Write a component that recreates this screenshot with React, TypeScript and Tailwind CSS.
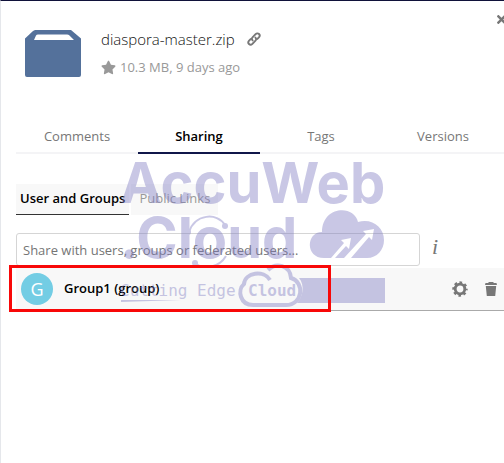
import { useState } from "react";
import { FaStar, FaTimes } from "react-icons/fa";

const tabs = ["Comments", "Sharing", "Tags", "Versions"];
const shareTabs = ["User and Groups", "Public Links"];

function ArchiveIcon() {
  return (
    <svg width="56" height="47" viewBox="0 0 56 47" fill="#54719b" fillRule="evenodd" aria-hidden="true">
      <path d="M10 0h36l10 8.5V45a2 2 0 0 1-2 2H2a2 2 0 0 1-2-2V8.5L8 1zM13 4.5q-1.500 0-2 1L9 10h40l-4.500-4.500q-1-1-2.500-1z" />
    </svg>
  );
}

function LinkIcon() {
  return (
    <svg width="14" height="14" viewBox="0 0 14 14" fill="none" stroke="currentColor" strokeWidth="1.9" strokeLinecap="round" aria-hidden="true">
      <path d="M5.600 8.400C4.600 7.400 4.700 6.200 5.500 5.400L8.600 2.200C9.700 1.100 11.100 1.100 12 2C12.900 2.900 12.900 4.300 11.900 5.400L10.400 6.900" />
      <path d="M8.400 5.600C9.400 6.600 9.300 7.800 8.500 8.600L5.400 11.800C4.300 12.900 2.900 12.900 2 12C1.100 11.100 1.100 9.700 2.100 8.600L3.600 7.100" />
    </svg>
  );
}

function GearIcon() {
  return (
    <svg width="16" height="16" viewBox="0 0 16 16" fill="none" stroke="currentColor" aria-hidden="true">
      <circle cx="8" cy="8" r="4.8" strokeWidth="2.8" />
      <circle cx="8" cy="8" r="6.5" strokeWidth="2.4" strokeDasharray="2.6 2.505" strokeDashoffset="1.3" />
    </svg>
  );
}

function TrashIcon() {
  return (
    <svg width="12" height="14" viewBox="0 0 12 14" fill="currentColor" aria-hidden="true">
      <path d="M4 0h4l1 1h2.500l.5 2H0l.5-2H3zM.8 4h10.400L10.200 14H1.800z" />
    </svg>
  );
}

function Watermark() {
  return (
    <svg
      className="pointer-events-none absolute left-[118px] top-[155px] overflow-visible"
      width="268"
      height="155"
      viewBox="0 0 268 155"
      fill="#7f7cc2"
      opacity="0.42"
      aria-hidden="true"
    >
      <g fontFamily="Inter, sans-serif" fontWeight="700" fontSize="56">
        <text x="1" y="47">AccuWeb</text>
        <text x="1" y="102">.Cloud</text>
      </g>
      {/* orbit around the "o" */}
      <g fill="none" stroke="#7f7cc2" strokeWidth="2">
        <path d="M70 76C76 58 98 56 106 69" />
        <path d="M76 107c8 7 24 5 31-7" />
      </g>
      <circle cx="69" cy="76" r="3" />
      <circle cx="106" cy="70" r="3" />
      <circle cx="76" cy="107" r="3" />
      {/* cloud with rising arrows */}
      <path
        fillRule="evenodd"
        d="M205 102c-19 0-18-26-2-26 0-26 32-28 36-10 14-4 26 5 26 18 0 10-7 18-17 18h-16l18-21 3 3 2-11-11 2 3 3-22 24h-9l11-12 3 3 2-11-10 2 3 3-13 15z"
      />
      <g fontFamily="'DejaVu Sans Mono', monospace" fontSize="16">
        <text x="1" y="140">Cutting Edge</text>
        <text x="129" y="140" fontWeight="700">Cloud</text>
      </g>
      <path d="M2 144h60l-60 2z" />
      <path d="M180 122h86v25h-88c6-6 8-18 2-25z" />
      <path
        fill="none"
        stroke="#7f7cc2"
        strokeWidth="4"
        d="M151 124C145 114 126 116 125 128C118 134 121 149 134 149h33c17 0 19-23 5-27C171 109 157 106 149 114"
      />
    </svg>
  );
}

export default function App() {
  const [tab, setTab] = useState("Sharing");
  const [shareTab, setShareTab] = useState("User and Groups");

  return (
    <main className="relative min-h-screen overflow-hidden border-l border-t border-l-gray-200 border-t-[#10123a] bg-white pl-[15px] font-['Open_Sans',sans-serif] text-[13px] text-[#777]">
      <button
        type="button"
        aria-label="Close"
        className="absolute -right-1 top-3 text-[#777]"
      >
        <FaTimes size={13} />
      </button>

      <header className="flex gap-5 pl-[9px] pt-[26px]">
        <div className="pt-[3px]">
          <ArchiveIcon />
        </div>
        <div>
          <div className="flex items-center gap-3">
            <h1 className="text-[15px] font-light leading-6 text-[#111]">diaspora-master.zip</h1>
            <a href="#link" aria-label="Copy link" className="text-[#777]">
              <LinkIcon />
            </a>
          </div>
          <p className="flex items-center gap-1 pt-1 leading-6 text-[#999]">
            <FaStar size={15} />
            10.3 MB, 9 days ago
          </p>
        </div>
      </header>

      <nav className="grid grid-cols-4 pt-[41px]">
        {tabs.map((name) => (
          <button
            key={name}
            type="button"
            onClick={() => setTab(name)}
            className={`border-b-2 pb-1 pt-1 leading-6 ${
              tab === name ? "border-[#10174a] font-semibold text-black" : "border-[#f4f4f6]"
            }`}
          >
            {name}
          </button>
        ))}
      </nav>

      <div className="flex gap-0.5 pt-[30px]">
        {shareTabs.map((name) => (
          <button
            key={name}
            type="button"
            onClick={() => setShareTab(name)}
            className={`border-b bg-[#f8f8f8] pb-1 pt-0.5 leading-6 ${
              shareTab === name ? "border-[#333] px-1 font-semibold text-black" : "border-[#f8f8f8] px-2 text-[#999]"
            }`}
          >
            {name}
          </button>
        ))}
      </div>

      <div className="flex items-center gap-3 pt-[18px]">
        <input
          type="text"
          aria-label="Share with users, groups or federated users"
          placeholder="Share with users, groups or federated users…"
          className="h-[33px] min-w-0 flex-1 rounded-[3px] border border-[#d5d5d5] px-1.5 placeholder:text-[#757575]"
        />
        <button
          type="button"
          aria-label="Sharing info"
          className="w-[72px] pb-1.5 text-left font-['Liberation_Serif',serif] text-[22px] italic leading-6"
        >
          i
        </button>
      </div>

      <ul className="pt-0.5">
        <li className="flex h-[43px] items-center border-b border-[#aaa] bg-[#f8f8f8] pl-[5px] pr-[7px]">
          <span className="flex size-8 items-center justify-center rounded-full bg-[#73cde4] text-[18px] text-white">
            G
          </span>
          <span className="pl-[11px] font-semibold text-black">Group1 (group)</span>
          <span className="ml-auto flex items-center gap-[17px]">
            <button type="button" aria-label="Share settings">
              <GearIcon />
            </button>
            <button type="button" aria-label="Unshare">
              <TrashIcon />
            </button>
          </span>
        </li>
      </ul>

      <Watermark />
      <div className="pointer-events-none absolute left-2 top-[264px] h-[47px] w-[322px] border-3 border-[#f80808]" />
    </main>
  );
}
